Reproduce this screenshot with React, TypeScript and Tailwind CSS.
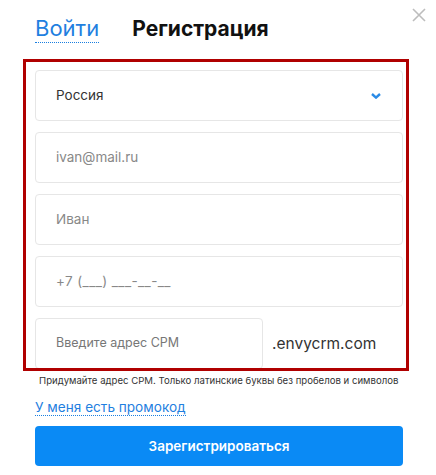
import React from "react"

const font = { fontFamily: "Inter, 'Noto Sans', sans-serif" }

function Field({ children }: { children: React.ReactNode }) {
  return (
    <div className="flex h-[51px] w-[368px] shrink-0 items-center rounded-[4px] border border-[#e6e6e6] bg-white pl-[20px] pr-[20px]">
      {children}
    </div>
  )
}

export default function App() {
  return (
    <div className="relative h-[475px] w-[436px] overflow-hidden bg-white text-[#333]" style={font}>
      <button className="absolute right-[10px] top-[8px] text-[#bdbdbd]" aria-label="close">
        <svg width="14" height="14" viewBox="0 0 14 14" fill="none" stroke="currentColor" strokeWidth="1.6">
          <path d="M1 1L13 13M13 1L1 13" />
        </svg>
      </button>

      <div className="mt-[15px] flex h-[29px] items-baseline pl-[35px]">
        <a className="border-b border-dotted border-[#1a7fe0] text-[22px] leading-[27px] text-[#1f80e0]">Войти</a>
        <span className="ml-[33px] text-[21px] font-bold leading-[27px] text-[#111]">Регистрация</span>
      </div>

      <div className="ml-[23px] mt-[15px] h-[312px] w-[386px] overflow-hidden border-[3px] border-[#b00000] pl-[9px] pr-[3px] pt-[8px]">
        <div className="flex flex-col gap-[11px]">
          <Field>
            <span className="flex-1 text-[13.5px] text-[#333]">Россия</span>
            <svg width="10" height="6" viewBox="0 0 10 6" fill="none" stroke="#2a8be6" strokeWidth="2.4" className="mr-[1px]">
              <path d="M1 1L5 4.6L9 1" />
            </svg>
          </Field>
          <Field>
            <span className="text-[13.5px] text-[#888]">ivan@mail.ru</span>
          </Field>
          <Field>
            <span className="text-[13.5px] text-[#888]">Иван</span>
          </Field>
          <Field>
            <span className="text-[13.5px] tracking-[0.4px] text-[#888]">+7 (___) ___-__-__</span>
          </Field>
          <div className="flex items-center">
            <div className="flex h-[51px] w-[228px] items-center rounded-[4px] border border-[#e6e6e6] pl-[20px]">
              <span className="text-[12.5px] text-[#777]">Введите адрес СРМ</span>
            </div>
            <span className="ml-[9px] text-[15.5px] text-[#333]">.envycrm.com</span>
          </div>
        </div>
      </div>

      <p className="mt-[3px] pl-[39px] text-[9.6px] leading-[14px] text-[#333]">
        Придумайте адрес СРМ. Только латинские буквы без пробелов и символов
      </p>

      <div className="mt-[6px] pl-[35px]">
        <a className="border-b border-dotted border-[#1a7fe0] text-[13.6px] leading-[18px] text-[#1f80e0]">У меня есть промокод</a>
      </div>

      <button className="ml-[35px] mt-[8px] flex h-[40px] w-[368px] items-center justify-center rounded-[4px] bg-[#0a8af5] text-[13.5px] font-semibold text-white">
        Зарегистрироваться
      </button>
    </div>
  )
}
